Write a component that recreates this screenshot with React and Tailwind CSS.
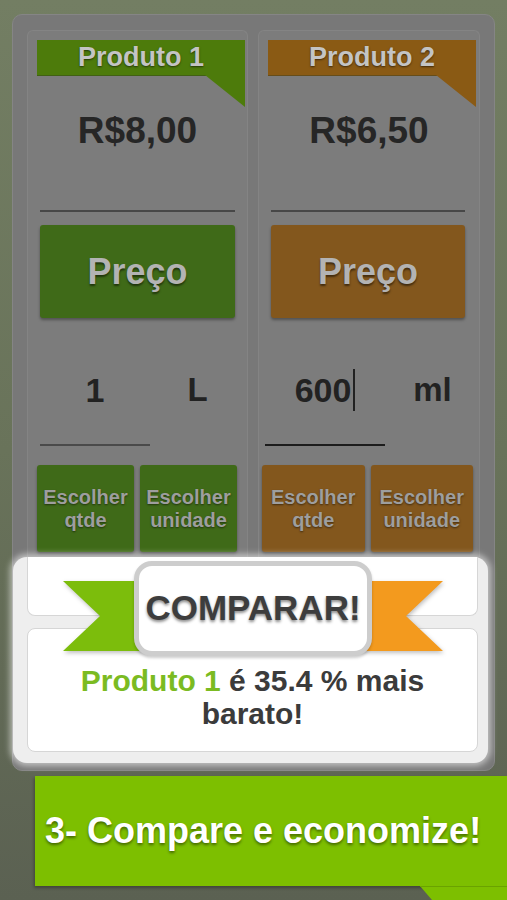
import React from 'react';

const font = { fontFamily: '"Liberation Sans", Arial, sans-serif' };

const products = [
  {
    name: 'Produto 1',
    price: 'R$8,00',
    qty: '1',
    unit: 'L',
    band: 'bg-[#4d7b0b]',
    tri: '#4d7b0b',
    btn: 'bg-[#3f6a18]',
    width: 'w-[221px]',
    bandRow: 'pl-[9px] pr-[2px]',
    lineRow: 'mx-[12px]',
    qtyRow: 'pl-[12px] pr-[12px]',
    qtyField: 'w-[110px]',
    underline: 'bg-[#4a4a4a]',
    cursor: false,
    btnRow: 'pl-[9px] pr-[10px]',
  },
  {
    name: 'Produto 2',
    price: 'R$6,50',
    qty: '600',
    unit: 'ml',
    band: 'bg-[#8a5a14]',
    tri: '#8a5a14',
    btn: 'bg-[#83571d]',
    width: 'w-[222px]',
    bandRow: 'pl-[9px] pr-[3px]',
    lineRow: 'ml-[12px] mr-[14px]',
    qtyRow: 'pl-[6px] pr-[9px]',
    qtyField: 'w-[120px]',
    underline: 'bg-[#1c1c1c]',
    cursor: true,
    btnRow: 'pl-[3px] pr-[6px]',
  },
];

function ProductCard({ p }) {
  return (
    <div className={`${p.width} h-[527px] shrink-0 flex flex-col rounded-t-[6px] border border-b-0 border-[#848484] bg-[#7c7c7c]`}>
      <div className={`mt-[9px] ${p.bandRow}`}>
        <div className={`relative h-[36px] ${p.band} border-b border-[#2f3a22]/40 flex items-center justify-center`}>
          <span className="text-[27px] font-bold text-[#c4c4c4] [text-shadow:0_1px_2px_rgba(0,0,0,0.55)]">{p.name}</span>
          <svg className="absolute right-0 top-full" width="40" height="32" viewBox="0 0 40 32">
            <polygon points="0,0 40,0 40,32" fill={p.tri} />
          </svg>
        </div>
      </div>

      <div className="h-[110px] flex items-center justify-center">
        <span className="text-[37px] font-bold text-[#262626]">{p.price}</span>
      </div>

      <div className={`mt-[24px] h-[2px] bg-[#474747] ${p.lineRow}`} />

      <div className={`mt-[13px] h-[93px] ${p.lineRow} ${p.btn} rounded-[3px] shadow-[0_2px_3px_rgba(0,0,0,0.35)] flex items-center justify-center`}>
        <span className="text-[36px] font-bold text-[#b3b3b3] [text-shadow:0_2px_2px_rgba(0,0,0,0.5)]">Preço</span>
      </div>

      <div className={`mt-[42px] h-[60px] flex items-center ${p.qtyRow}`}>
        <div className={`${p.qtyField} flex justify-center items-center`}>
          <span className="text-[34px] font-bold text-[#222]">{p.qty}</span>
          {p.cursor && <span className="ml-[2px] w-[2px] h-[42px] bg-[#222]" />}
        </div>
        <div className="flex-1 pl-[10px] text-center text-[33px] font-bold text-[#222]">{p.unit}</div>
      </div>
      <div className={`${p.qtyRow}`}>
        <div className={`mt-[24px] h-[2px] ${p.qtyField} ${p.underline}`} />
      </div>

      <div className={`mt-[19px] h-[87px] flex gap-[6px] ${p.btnRow}`}>
        {['qtde', 'unidade'].map((w) => (
          <div
            key={w}
            className={`flex-1 ${p.btn} rounded-[3px] shadow-[0_2px_3px_rgba(0,0,0,0.35)] flex flex-col items-center justify-center text-[20px] leading-[23px] font-bold text-[#9e9e9e] [text-shadow:0_1px_2px_rgba(0,0,0,0.5)]`}
          >
            <span>Escolher</span>
            <span>{w}</span>
          </div>
        ))}
      </div>
    </div>
  );
}

function CompareSpot() {
  return (
    <div className="relative w-[475px] h-[206px] rounded-[14px] bg-[#eeeeee] shadow-[0_0_6px_3px_rgba(255,255,255,0.55)] pl-[14px] pr-[10px] flex flex-col">
      <div className="h-[59px] bg-white rounded-b-[8px] border border-t-0 border-[#d6d6d6]" />
      <div className="mt-[12px] h-[124px] bg-white rounded-[8px] border border-[#d6d6d6] pt-[35px] text-center text-[30px] leading-[33px] font-bold text-[#3b3b3b]">
        <span className="text-[#7bbb22]">Produto 1</span> é 35.4 % mais
        <br />
        barato!
      </div>

      <svg className="absolute left-[50px] top-[24px] drop-shadow-[1px_2px_2px_rgba(0,0,0,0.25)]" width="380" height="70" viewBox="0 0 380 70">
        <polygon points="0,0 85,0 85,70 0,70 37,35" fill="#7cbd0c" />
        <polygon points="295,0 380,0 343,35 380,70 295,70" fill="#f39a1e" />
      </svg>

      <div className="absolute left-[121px] top-[4px] w-[238px] h-[95px] rounded-[18px] border-[5px] border-[#cdcdcd] bg-white shadow-[0_2px_3px_rgba(0,0,0,0.2)] flex items-center justify-center">
        <span className="text-[35px] font-bold text-[#3d3d3d] [text-shadow:0_2px_3px_rgba(0,0,0,0.45)]">COMPARAR!</span>
      </div>
    </div>
  );
}

export default function App() {
  return (
    <div
      style={font}
      className="w-[507px] h-[900px] overflow-hidden flex flex-col bg-gradient-to-b from-[#737e63] via-[#69735a] to-[#5b6152]"
    >
      <div className="ml-[12px] mt-[14px] w-[483px] rounded-[10px] border border-[#858585] bg-[#787878] pb-[7px] flex flex-col">
        <div className="pt-[15px] pl-[14px] pr-[14px] flex gap-[10px]">
          {products.map((p) => (
            <ProductCard key={p.name} p={p} />
          ))}
        </div>
        <CompareSpot />
      </div>

      <div className="mt-[5px] ml-[35px] w-[472px] h-[111px] bg-[#7dbf00] shadow-[-1px_2px_3px_rgba(0,0,0,0.3)] flex items-center pl-[10px]">
        <span className="text-[36px] font-bold text-white whitespace-nowrap [text-shadow:0_2px_3px_rgba(0,0,0,0.45)]">
          3- Compare e economize!
        </span>
      </div>
      <div className="flex justify-end">
        <svg width="87" height="14" viewBox="0 0 87 14">
          <polygon points="0,0 87,0 87,14 12,14" fill="#7dbf00" />
          <line x1="0" y1="0.5" x2="87" y2="0.5" stroke="#6aa300" strokeWidth="1" />
        </svg>
      </div>
    </div>
  );
}
